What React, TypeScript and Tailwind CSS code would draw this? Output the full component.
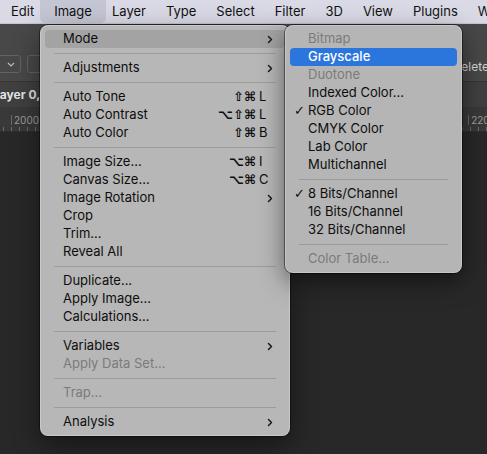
import React from "react";

type Item =
  | "sep"
  | {
      label: string;
      sub?: boolean;
      mods?: string;
      k?: string;
      disabled?: boolean;
      active?: boolean;
      hover?: boolean;
      checked?: boolean;
    };

const MAIN: Item[] = [
  { label: "Mode", sub: true, hover: true },
  "sep",
  { label: "Adjustments", sub: true },
  "sep",
  { label: "Auto Tone", mods: "⇧⌘", k: "L" },
  { label: "Auto Contrast", mods: "⌥⇧⌘", k: "L" },
  { label: "Auto Color", mods: "⇧⌘", k: "B" },
  "sep",
  { label: "Image Size...", mods: "⌥⌘", k: "I" },
  { label: "Canvas Size...", mods: "⌥⌘", k: "C" },
  { label: "Image Rotation", sub: true },
  { label: "Crop" },
  { label: "Trim..." },
  { label: "Reveal All" },
  "sep",
  { label: "Duplicate..." },
  { label: "Apply Image..." },
  { label: "Calculations..." },
  "sep",
  { label: "Variables", sub: true },
  { label: "Apply Data Set...", disabled: true },
  "sep",
  { label: "Trap...", disabled: true },
  "sep",
  { label: "Analysis", sub: true },
];

const MODE: Item[] = [
  { label: "Bitmap", disabled: true },
  { label: "Grayscale", active: true },
  { label: "Duotone", disabled: true },
  { label: "Indexed Color..." },
  { label: "RGB Color", checked: true },
  { label: "CMYK Color" },
  { label: "Lab Color" },
  { label: "Multichannel" },
  "sep",
  { label: "8 Bits/Channel", checked: true },
  { label: "16 Bits/Channel" },
  { label: "32 Bits/Channel" },
  "sep",
  { label: "Color Table...", disabled: true },
];

const BAR = ["Edit", "Image", "Layer", "Type", "Select", "Filter", "3D", "View", "Plugins", "Window"];

function Chevron() {
  return (
    <svg width="6" height="9" viewBox="0 0 6 9" className="ml-auto mr-[-2px]">
      <path d="M1.5 1.5 L4.5 4.5 L1.5 7.5" fill="none" stroke="#1a1a1a" strokeWidth="1.5" strokeLinecap="round" strokeLinejoin="round" />
    </svg>
  );
}

function MenuRows({ items }: { items: Item[] }) {
  return (
    <>
      {items.map((it, i) => {
        if (it === "sep") {
          return (
            <div key={i} className="h-[11px] flex items-center mx-[14px]">
              <div className="h-px w-full bg-[#9c9c9c]" />
            </div>
          );
        }
        const color = it.active ? "text-white" : it.disabled ? "text-[#7b7b7b]" : "text-[#0e0e0e]";
        const bg = it.active ? "bg-[#2b76dc]" : it.hover ? "bg-[#a3a3a3]" : "";
        return (
          <div key={i} className={`relative h-[18px] mx-[5px] pl-[18px] pr-[14px] rounded-[4px] flex items-center ${bg} ${color}`}>
            {it.checked && (
              <span className="absolute left-[4px] top-0 h-[18px] flex items-center text-[13px] font-['DejaVu_Sans',sans-serif]">✓</span>
            )}
            <span className={it.active ? "font-medium" : ""}>{it.label}</span>
            {it.sub && <Chevron />}
            {it.k && (
              <span className="ml-auto flex items-center">
                <span className="text-[13px] font-semibold font-['DejaVu_Sans',sans-serif] mr-[3px]">{it.mods}</span>
                <span className="w-[12px] text-left">{it.k}</span>
              </span>
            )}
          </div>
        );
      })}
    </>
  );
}

export default function App() {
  return (
    <div className="relative w-[487px] h-[454px] overflow-hidden bg-[#282828] font-['Inter','Liberation_Sans',sans-serif] antialiased flex flex-col">
      {/* mac menu bar */}
      <div className="h-[24px] shrink-0 bg-[#d9dae6] border-b border-[#c4c5d0] flex items-center pl-[11px] gap-[20px] text-[13px] text-[#111] whitespace-nowrap">
        {BAR.map((b) => (
          <span
            key={b}
            className={b === "Image" ? "-mx-[14px] px-[14px] h-[23px] self-start flex items-center rounded-b-[5px] bg-[#c5c6d3]" : ""}
          >
            {b}
          </span>
        ))}
      </div>

      {/* options bar */}
      <div className="h-[58px] shrink-0 bg-[#484848] border-b border-[#353535] flex items-end pb-[8px] gap-[6px]">
        <div className="-ml-[10px] w-[31px] h-[18px] border border-[#636363] rounded-[3px] flex items-center justify-end pr-[5px]">
          <svg width="8" height="5" viewBox="0 0 8 5">
            <path d="M1 1 L4 4 L7 1" fill="none" stroke="#bdbdbd" strokeWidth="1.2" />
          </svg>
        </div>
        <div className="w-[40px] h-[18px] border border-[#636363] rounded-[3px]" />
        <span className="ml-auto -mr-[2px] -mb-[2px] leading-[16px] text-[12px] text-[#d6d6d6]">Delete</span>
      </div>

      {/* document tab */}
      <div className="h-[25px] shrink-0 bg-[#404040] flex items-center">
        <span className="-ml-[7px] text-[12px] font-bold text-[#e4e4e4] whitespace-nowrap">Layer 0, RGB/8</span>
      </div>

      {/* ruler */}
      <div className="h-[25px] shrink-0 bg-[#393939] border-b border-[#2e2e2e] flex flex-col justify-end">
        <div className="flex justify-between text-[10px] text-[#9c9c9c] px-[11px] leading-none">
          <span className="border-l border-[#6a6a6a] pl-[2px]">2000</span>
          <span className="border-l border-[#6a6a6a] pl-[2px] -mr-[20px]">2200</span>
        </div>
        <div className="h-[6px] flex gap-[7px] pl-[3px]">
          {Array.from({ length: 62 }).map((_, i) => (
            <span key={i} className="w-px h-[4px] self-end bg-[#6a6a6a]" />
          ))}
        </div>
      </div>

      <div className="flex-1 bg-[#282828]" />

      {/* Image menu */}
      <div className="absolute left-[40px] top-[25px] w-[250px] py-[5px] rounded-[8px] bg-[#b7b7b7] text-[13px] shadow-[inset_0_0_0_1px_rgba(255,255,255,0.25),0_0_0_1px_rgba(0,0,0,0.45),0_10px_28px_rgba(0,0,0,0.45)]">
        <MenuRows items={MAIN} />
      </div>

      {/* Mode submenu */}
      <div className="absolute left-[285px] top-[25px] w-[177px] py-[5px] rounded-[8px] bg-[#b5b5b5] text-[13px] shadow-[inset_0_0_0_1px_rgba(255,255,255,0.25),0_0_0_1px_rgba(0,0,0,0.45),0_8px_24px_rgba(0,0,0,0.5)]">
        <MenuRows items={MODE} />
      </div>
    </div>
  );
}
